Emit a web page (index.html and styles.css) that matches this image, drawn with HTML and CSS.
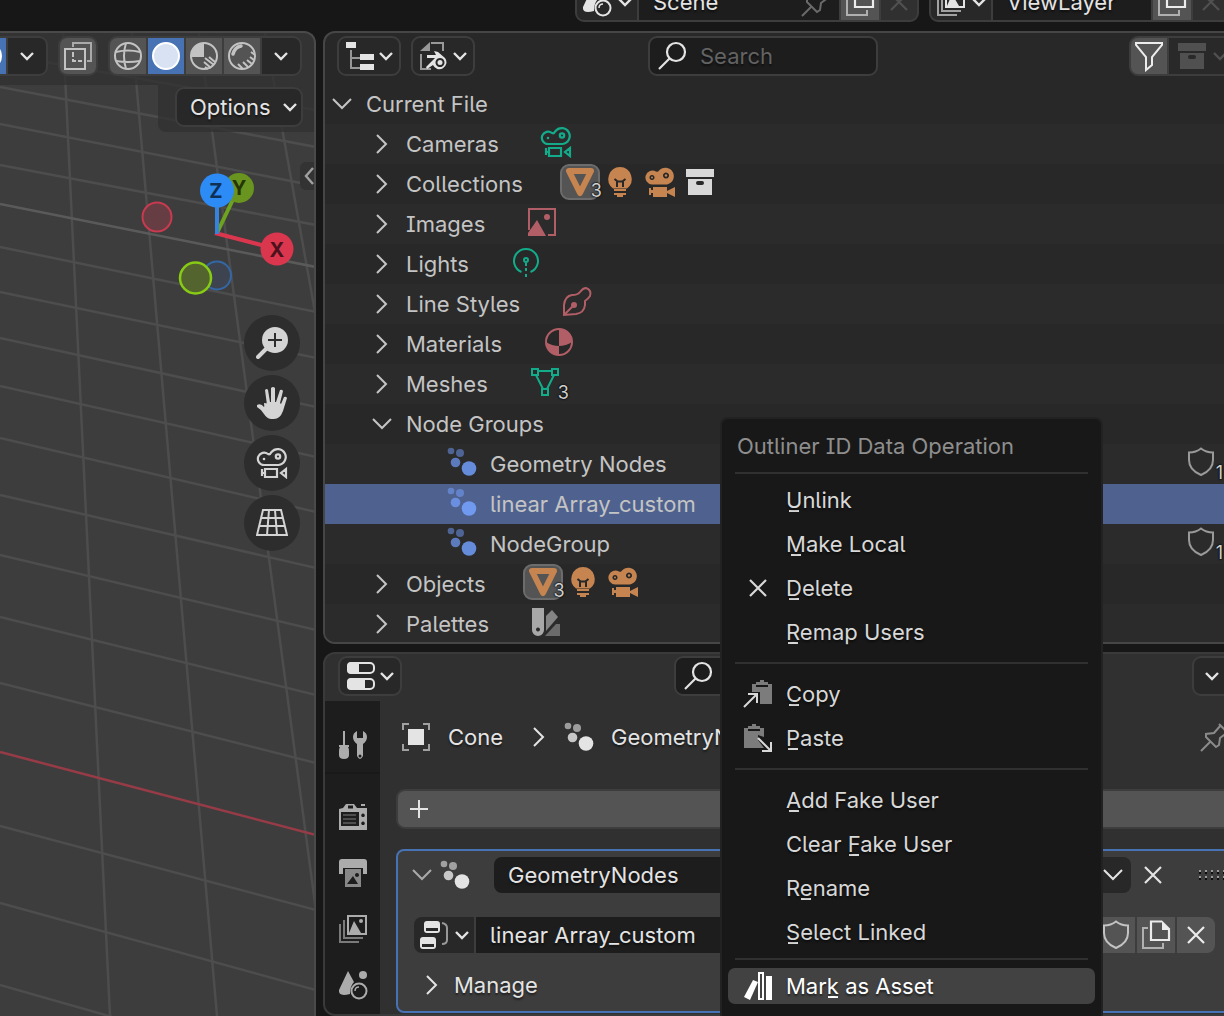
FILE: index.html
```html
<!DOCTYPE html>
<html lang="en">
<head>
<meta charset="utf-8">
<title>Outliner</title>
<link rel="stylesheet" href="styles.css">
</head>
<body>
<svg class="defs" aria-hidden="true">
  <symbol id="down" viewBox="0 0 16 16"><path d="M2 5l6 6 6-6" fill="none" stroke="currentColor" stroke-width="2.4"/></symbol>
  <symbol id="open" viewBox="0 0 20 20"><path d="M1 5l9 9 9-9" fill="none" stroke="currentColor" stroke-width="2"/></symbol>
  <symbol id="closed" viewBox="0 0 20 20"><path d="M5 1l9 9-9 9" fill="none" stroke="currentColor" stroke-width="2"/></symbol>
  <symbol id="cross" viewBox="0 0 32 32"><path d="M8 8l16 16M24 8L8 24" stroke="currentColor" stroke-width="2.2"/></symbol>
  <symbol id="search" viewBox="0 0 32 32"><g fill="none" stroke="currentColor" stroke-width="2.2"><circle cx="20" cy="12" r="9"/><path d="M13.500 18.500L3 29"/></g></symbol>
  <symbol id="camera" viewBox="0 0 32 32"><g fill="none" stroke="currentColor" stroke-width="2.200"><path d="M8 18a6.200 6.200 0 1 1 4-11q2 1 3.500-2A8 8 0 1 1 22.500 18z"/><circle cx="22" cy="9.500" r="2.200"/><path d="M9 22h12v8H9zM9 26H6m0-4v7M30 22v8l-5-4z"/></g><circle cx="8" cy="12" r="1.300" fill="currentColor"/></symbol>
  <symbol id="camera-solid" viewBox="0 0 32 32"><path fill-rule="evenodd" fill="currentColor" d="M8 18.500a7 7 0 1 1 4-13q2 1 3-1A8.500 8.500 0 1 1 23 18.500zM8 9a2.500 2.500 0 1 0 .01 0zM22 6.500a3 3 0 1 0 .01 0zM9 21h14v4l8-4v10l-8-4v4H9v-4H7v2H5v-7h2v2h2z"/><circle cx="8" cy="11.500" r="1" fill="currentColor"/><circle cx="22" cy="9.500" r="1.200" fill="currentColor"/></symbol>
  <symbol id="mesh-object" viewBox="0 0 32 32"><path d="M5 5h22L16 27z" fill="none" stroke="currentColor" stroke-width="6" stroke-linejoin="round"/></symbol>
  <symbol id="bulb" viewBox="0 0 32 32"><path fill="currentColor" d="M16 1a12 12 0 0 1 7 21.500H9A12 12 0 0 1 16 1zM10 23h12v2H10zM10 27h12v2H10zM13 29h6v2h-6z"/><path d="M10.500 13l2.500 2v6M21.500 13L19 15v6M13 15.500h6" fill="none" stroke="#282828" stroke-width="2"/></symbol>
  <symbol id="archive" viewBox="0 0 32 32"><path fill-rule="evenodd" fill="currentColor" d="M2 3h28v8H2zM4 13h24v16H4zM14 15a2 2 0 0 0 0 4h4a2 2 0 0 0 0-4z"/></symbol>
  <symbol id="image" viewBox="0 0 32 32"><path d="M3 24V3h26v26h-7" fill="none" stroke="currentColor" stroke-width="2"/><path d="M2 30v-3l9-13 9 16z" fill="currentColor"/><circle cx="21" cy="11" r="3" fill="currentColor"/></symbol>
  <symbol id="light" viewBox="0 0 32 32"><g fill="none" stroke="currentColor" stroke-width="2"><path d="M11.500 26a12 12 0 1 1 9 0"/><circle cx="16" cy="14" r="2"/><path d="M16 17v3m0 2v3m0 3v3"/></g></symbol>
  <symbol id="linestyle" viewBox="0 0 32 32"><path d="M3 29V19q1-9 8-10 6 0 8-3 3-4 6-4 6 2 4 8-2 3-5 5v4q-1 8-9 9zL12 20" fill="none" stroke="currentColor" stroke-width="2"/><circle cx="13" cy="19" r="3" fill="currentColor"/></symbol>
  <symbol id="material" viewBox="0 0 32 32"><circle cx="16" cy="16" r="13" fill="none" stroke="currentColor" stroke-width="2"/><path d="M16 3a13 13 0 0 1 13 13q-6 4-13 4zM16 20v9A13 13 0 0 1 3 16q6 4 13 4z" fill="currentColor"/></symbol>
  <symbol id="mesh" viewBox="0 0 32 32"><path d="M3 3h6v6H3zM23 3h6v6h-6zM13 23h6v6h-6zM9 5h14M7 9l7 14M25 9l-7 14" fill="none" stroke="currentColor" stroke-width="2"/></symbol>
  <symbol id="nodes" viewBox="0 0 32 32"><g fill="currentColor"><circle cx="5" cy="5" r="3.300" opacity=".6"/><circle cx="14" cy="7" r="4" opacity=".6"/><circle cx="9.500" cy="16.500" r="4.800" opacity=".83"/><circle cx="23" cy="22.500" r="7.300"/></g></symbol>
  <symbol id="palette" viewBox="0 0 32 32"><path fill-rule="evenodd" fill="#a8a8a8" d="M2 2h12v22a6 6 0 0 1-12 0zM8 21.500a2 2 0 1 0 .01 0z"/><path d="M16 10l6-6 6 7-12 14z" fill="#858585"/><path d="M15 30l11-12h4v12z" fill="#6b6b6b"/></symbol>
  <symbol id="shield" viewBox="0 0 32 32"><path d="M16 2.500q5 4 12 4V14q0 10-12 15Q4 24 4 14V6.500q7 0 12-4z" fill="none" stroke="currentColor" stroke-width="2"/></symbol>
  <symbol id="pin" viewBox="0 0 32 32"><path d="M2 30l9-9M20 3l9 9M22 4l-7 8-8 1 0 3 10 10 3-2 1-7 8-6" fill="none" stroke="currentColor" stroke-width="2"/></symbol>
  <symbol id="copy" viewBox="0 0 32 32"><path d="M8 9H3v20h20v-5" fill="none" stroke="#b0b0b0" stroke-width="2"/><path d="M22 2.500H11V21h18V11" fill="none" stroke="currentColor" stroke-width="2.200"/><path d="M22 1.500l8 8v1.500h-8z" fill="currentColor"/></symbol>
  <symbol id="layers" viewBox="0 0 32 32"><g fill="none" stroke="currentColor" stroke-width="2"><path d="M11 3h18v18H11z"/><path opacity=".65" d="M7 7v18h19M3 11v18h19"/></g><path d="M12 20l5-12 7 12z" fill="currentColor"/><circle cx="24" cy="8" r="2" fill="currentColor"/></symbol>
  <symbol id="scene" viewBox="0 0 32 32"><path d="M11 2l6 11q-4 4-4 12-12 3-11-4z" fill="currentColor"/><circle cx="26" cy="6" r="4" fill="currentColor"/><circle cx="22" cy="22" r="7.500" fill="none" stroke="currentColor" stroke-width="2"/><path d="M18 22q0-4 4-4" fill="none" stroke="currentColor" stroke-width="1.500"/></symbol>
  <symbol id="outliner" viewBox="0 0 32 32"><path d="M7 10v18h9M7 18h9" fill="none" stroke="#989898" stroke-width="2"/><path d="M2 2h10v6H2zM16 14h14v6H16zM16 24h14v6H16z" fill="currentColor"/></symbol>
  <symbol id="blendfile" viewBox="0 0 32 32"><path d="M13 3h12v8M3 14v15h10" fill="none" stroke="#989898" stroke-width="2"/><path d="M2 11L12 2v9z" fill="#989898"/><path fill="currentColor" fill-rule="evenodd" d="M9 15h9l-2-4 4 1 7 6a7 7 0 1 1-12 7l-6 4-1-2 9-9H9zM22 18a4.500 4.500 0 1 0 .01 0z"/><circle cx="22" cy="22.500" r="2.500" fill="currentColor"/></symbol>
  <symbol id="funnel" viewBox="0 0 32 32"><path d="M3 3h26v2L19 17v8l-6 5V17L3 5z" fill="none" stroke="currentColor" stroke-width="2"/></symbol>
  <symbol id="properties" viewBox="0 0 32 32"><rect x="3" y="3" width="26" height="10" rx="4" fill="none" stroke="currentColor" stroke-width="2"/><path d="M14 2v12H6q-4 0-4-4V6q0-4 4-4z" fill="currentColor"/><rect x="3" y="19" width="26" height="10" rx="4" fill="none" stroke="currentColor" stroke-width="2"/><path d="M20 18v12H6q-4 0-4-4v-4q0-4 4-4z" fill="currentColor"/></symbol>
  <symbol id="tool" viewBox="0 0 32 32"><path fill="currentColor" d="M6 2h2v14h4v2h-1q1 1 1 4v4q0 4-5 4t-5-4v-4q0-3 1-4H2v-2h4zM20 2v7h6V2q4 2 4 6t-4 7v12q-3 6-6 0V15q-4-3-4-7t4-6z"/><circle cx="23" cy="27" r="1.500" fill="#1d1d1d"/></symbol>
  <symbol id="render" viewBox="0 0 32 32"><path fill-rule="evenodd" fill="currentColor" d="M2 8l4-1 3-4h8l3 4h10v22H2zM4 11v14h18V11zM11 4.500v3h5v-3zM26 12.500a1.800 1.800 0 1 0 .01 0zM26 20.500a1.800 1.800 0 1 0 .01 0zM24 3h4v2h-4z"/><path d="M6 14h13M6 18h13M6 22h13" stroke="currentColor" stroke-width="1.500" opacity=".45"/></symbol>
  <symbol id="output" viewBox="0 0 32 32"><path d="M5 2h22q3 0 3 3v12h-4v-6H6v6H2V5q0-3 3-3z" fill="currentColor"/><path fill-rule="evenodd" d="M8 12h16v18H8zM10 27h11l-5-8zM20 16a2 2 0 1 0 .01 0z" fill="currentColor" opacity=".75"/></symbol>
  <symbol id="object" viewBox="0 0 32 32"><path d="M3 9V3h6M23 3h6v6M29 23v6h-6M9 29H3v-6" fill="none" stroke="#a0a0a0" stroke-width="2"/><path d="M8 8h16v16H8z" fill="currentColor"/></symbol>
  <symbol id="nodetree" viewBox="0 0 32 32"><path fill-rule="evenodd" fill="currentColor" d="M9 2h10q3 0 3 3v6q0 3-3 3H9q-3 0-3-3V5q0-3 3-3zM8 9v3h12V9zM5 18h10q3 0 3 3v6q0 3-3 3H5q-3 0-3-3v-6q0-3 3-3zM4 25v3h12v-3z"/><path d="M24 4q5 1 5 5v12q0 4-5 4" fill="none" stroke="#989898" stroke-width="2"/></symbol>
  <symbol id="clip-out" viewBox="0 0 32 32"><path d="M10 6h4V4h4V2h4v2h4v2h4v20H18V14h-8z" fill="#7c7c7c"/><path d="M14 8h12" stroke="#181818" stroke-width="2"/><path d="M2 29l13-13M6 16h9v9" fill="none" stroke="currentColor" stroke-width="2"/></symbol>
  <symbol id="clip-in" viewBox="0 0 32 32"><path d="M2 6h4V4h4V2h4v2h4v2h4v9l-6-2v5l6 8H2z" fill="#7c7c7c"/><path d="M6 8h12" stroke="#181818" stroke-width="2"/><path d="M16 16l13 13M29 20v9h-9" fill="none" stroke="currentColor" stroke-width="2"/></symbol>
  <symbol id="asset" viewBox="0 0 32 32"><path d="M11 10l5 2-8 18-6-3z" fill="currentColor"/><path d="M17 3h4v26h-4z" fill="none" stroke="currentColor" stroke-width="2"/><path d="M24 6h6v24h-6z" fill="currentColor"/></symbol>
  <symbol id="xray" viewBox="0 0 32 32"><path d="M11 7V3h18v18h-4" fill="none" stroke="#aaa" stroke-width="2"/><path d="M3 9h20v20H3z" fill="none" stroke="currentColor" stroke-width="2"/><path d="M11 12v5m0 2v2h3m2 0h4" fill="none" stroke="currentColor" stroke-width="2"/></symbol>
  <symbol id="wire" viewBox="0 0 32 32"><g fill="none" stroke="currentColor" stroke-width="2"><circle cx="16" cy="16" r="13"/><path d="M14 3q-4 13 0 26M4 12q12-3 24 0M4 21q12 2 24 0"/></g></symbol>
  <symbol id="solid" viewBox="0 0 32 32"><circle cx="16" cy="16" r="13" fill="#d9e2f2" stroke="#fff" stroke-width="2"/></symbol>
  <symbol id="matview" viewBox="0 0 32 32"><circle cx="16" cy="16" r="13" fill="none" stroke="currentColor" stroke-width="2"/><path d="M16 3v14H3A13 13 0 0 1 16 3z" fill="currentColor"/><path d="M17 18l9 7M21 17l6 5M16 22l7 6M17 27l3 2" stroke="currentColor" stroke-width="2"/></symbol>
  <symbol id="rendered" viewBox="0 0 32 32"><circle cx="16" cy="16" r="13" fill="none" stroke="currentColor" stroke-width="2"/><path d="M7 14q2-7 8-8" stroke="currentColor" stroke-width="3.500" stroke-linecap="round" fill="none"/><path d="M25 12l4 3M24 17l4 3M21 20l5 4M17 22l5 5M12 24l5 5" stroke="currentColor" stroke-width="2"/></symbol>
  <symbol id="zoomin" viewBox="0 0 32 32"><circle cx="19" cy="13" r="13" fill="currentColor"/><path d="M10 22l-8 8" stroke="currentColor" stroke-width="4" stroke-linecap="round"/><path d="M19 6v14M12 13h14" stroke="#2d2d2d" stroke-width="2"/></symbol>
  <symbol id="hand" viewBox="0 0 32 32"><path d="M8 16L9 28h13l4-10" fill="currentColor"/><path d="M1 18q4-2 7 2l3-2L9 3q2-2 3 0l2 12h1V1q2-2 4 0v14h1l4-12q2-1 3 1l-3 12 1 1 3-7q2-1 3 1l-4 13q-3 8-9 8-6 1-10-5-2-4-7-7z" fill="currentColor"/></symbol>
  <symbol id="persp" viewBox="0 0 32 32"><path d="M7 3h18l6 25H1zM5 11h22M3 19h26M13 3l-2 25M19 3l2 25" fill="none" stroke="currentColor" stroke-width="2"/></symbol>
</svg>

<header class="topbar">
  <div class="group">
    <button class="cell pick" aria-label="Browse scene"><svg class="i"><use href="#scene"/></svg><svg class="d"><use href="#down"/></svg></button>
    <input class="cell field name" value="Scene" aria-label="Scene name">
    <button class="cell field pinned" aria-label="Pin scene"><svg class="i"><use href="#pin"/></svg></button>
    <button class="cell light" aria-label="New scene"><svg class="i"><use href="#copy"/></svg></button>
    <button class="cell off" aria-label="Remove scene"><svg class="i"><use href="#cross"/></svg></button>
  </div>
  <div class="group">
    <button class="cell pick" aria-label="Browse view layer"><svg class="i"><use href="#layers"/></svg><svg class="d"><use href="#down"/></svg></button>
    <input class="cell field layer" value="ViewLayer" aria-label="View layer name">
    <button class="cell light" aria-label="New view layer"><svg class="i"><use href="#copy"/></svg></button>
    <button class="cell off" aria-label="Remove view layer"><svg class="i"><use href="#cross"/></svg></button>
  </div>
</header>

<main class="workspace">
  <section class="viewport">
    <svg class="grid" viewBox="0 33 316 983" preserveAspectRatio="xMinYMin slice">
      <g stroke="#4d4d4d" stroke-width="2.500" fill="none">
        <path d="M63 33L110 1016M132 33L217 1016M199 33L330 1016M265 33L320 340"/>
        <path d="M0 54L316 110M0 87L316 147M0 124L316 186M0 165L316 225M0 247L316 312M0 292L316 358M0 338L316 407M0 386L316 457M0 438L316 512M0 495L316 568M0 555L316 630M0 617L316 695M0 683L316 763M0 826L316 910M0 903L316 990M0 985L316 1075"/>
        <path d="M0 204L316 267" stroke="#5a5a5a"/>
        <path d="M0 752L316 835" stroke="#973b47"/>
      </g>
    </svg>
    <div class="vp-header">
      <div class="group">
        <button class="cell on" aria-label="Overlays"><svg class="i"><use href="#solid"/></svg></button>
        <button class="cell drop" aria-label="Overlay options"><svg class="d"><use href="#down"/></svg></button>
      </div>
      <div class="group"><button class="cell light" aria-label="X-ray"><svg class="i"><use href="#xray"/></svg></button></div>
      <div class="group shading">
        <button class="cell light" aria-label="Wireframe"><svg class="i"><use href="#wire"/></svg></button>
        <button class="cell on" aria-label="Solid"><svg class="i"><use href="#solid"/></svg></button>
        <button class="cell light" aria-label="Material preview"><svg class="i"><use href="#matview"/></svg></button>
        <button class="cell light" aria-label="Rendered"><svg class="i"><use href="#rendered"/></svg></button>
        <button class="cell drop" aria-label="Shading options"><svg class="d"><use href="#down"/></svg></button>
      </div>
    </div>
    <div class="vp-tools"><button class="box options">Options <svg class="d"><use href="#down"/></svg></button></div>
    <button class="sidebar-tab" aria-label="Show sidebar"><svg viewBox="0 0 10 18"><path d="M9 1L2 9l7 8" fill="none" stroke="currentColor" stroke-width="2.400"/></svg></button>
    <svg class="gizmo" viewBox="140 170 156 128">
      <circle cx="157" cy="217" r="14.500" fill="#653d43" stroke="#c83a4f" stroke-width="2"/>
      <circle cx="217" cy="275.500" r="14" fill="#3d4450" stroke="#3467a5" stroke-width="2"/>
      <circle cx="195.500" cy="278" r="15.500" fill="#54642f" stroke="#87cb14" stroke-width="2.500"/>
      <path d="M217 233l21-44" stroke="#6ea31f" stroke-width="4"/>
      <circle cx="239" cy="188" r="15" fill="#69941f"/><text x="239" y="195" fill="#263508">Y</text>
      <path d="M215 233l62 16" stroke="#da374f" stroke-width="4"/>
      <circle cx="277" cy="249" r="16.500" fill="#da374f"/><text x="277" y="257" fill="#4b121b">X</text>
      <path d="M217 234v-44" stroke="#3583dc" stroke-width="4"/>
      <circle cx="217" cy="190.500" r="17" fill="#2c8bf5"/><text x="216" y="198" fill="#0e3055">Z</text>
    </svg>
    <nav class="vp-nav">
      <button aria-label="Zoom"><svg class="n"><use href="#zoomin"/></svg></button>
      <button aria-label="Move"><svg class="n"><use href="#hand"/></svg></button>
      <button aria-label="Camera view"><svg class="n"><use href="#camera"/></svg></button>
      <button aria-label="Perspective"><svg class="n"><use href="#persp"/></svg></button>
    </nav>
  </section>

  <div class="column">
    <section class="panel outliner">
      <header class="bar">
        <div class="left">
          <button class="box" aria-label="Editor type"><svg class="i"><use href="#outliner"/></svg><svg class="d"><use href="#down"/></svg></button>
          <button class="box" aria-label="Display mode"><svg class="i"><use href="#blendfile"/></svg><svg class="d"><use href="#down"/></svg></button>
        </div>
        <label class="search"><svg class="i"><use href="#search"/></svg><input type="search" placeholder="Search" aria-label="Search"></label>
        <div class="right">
          <div class="group">
            <button class="cell light bright" aria-label="Filter"><svg class="i"><use href="#funnel"/></svg></button>
            <button class="cell off wide" aria-label="Asset filter"><svg class="i"><use href="#archive"/></svg><svg class="d"><use href="#down"/></svg></button>
          </div>
        </div>
      </header>
      <ul class="tree">
        <li class="row l0"><svg class="t"><use href="#open"/></svg><span>Current File</span></li>
        <li class="row l1"><svg class="t"><use href="#closed"/></svg><span>Cameras</span><div class="icons data"><i><svg class="i"><use href="#camera"/></svg></i></div></li>
        <li class="row l1"><svg class="t"><use href="#closed"/></svg><span>Collections</span><div class="icons obj"><i class="active"><svg class="i"><use href="#mesh-object"/></svg><b>3</b></i><i><svg class="i"><use href="#bulb"/></svg></i><i><svg class="i"><use href="#camera-solid"/></svg></i><i class="white"><svg class="i"><use href="#archive"/></svg></i></div></li>
        <li class="row l1"><svg class="t"><use href="#closed"/></svg><span>Images</span><div class="icons shade"><i><svg class="i"><use href="#image"/></svg></i></div></li>
        <li class="row l1"><svg class="t"><use href="#closed"/></svg><span>Lights</span><div class="icons data"><i><svg class="i"><use href="#light"/></svg></i></div></li>
        <li class="row l1"><svg class="t"><use href="#closed"/></svg><span>Line Styles</span><div class="icons shade"><i><svg class="i"><use href="#linestyle"/></svg></i></div></li>
        <li class="row l1"><svg class="t"><use href="#closed"/></svg><span>Materials</span><div class="icons shade"><i><svg class="i"><use href="#material"/></svg></i></div></li>
        <li class="row l1"><svg class="t"><use href="#closed"/></svg><span>Meshes</span><div class="icons data"><i><svg class="i"><use href="#mesh"/></svg><b>3</b></i></div></li>
        <li class="row l1"><svg class="t"><use href="#open"/></svg><span>Node Groups</span></li>
        <li class="row l2"><svg class="i"><use href="#nodes"/></svg><span>Geometry Nodes</span><i class="users"><svg class="i"><use href="#shield"/></svg><b>1</b></i></li>
        <li class="row l2 selected"><svg class="i"><use href="#nodes"/></svg><span>linear Array_custom</span></li>
        <li class="row l2"><svg class="i"><use href="#nodes"/></svg><span>NodeGroup</span><i class="users"><svg class="i"><use href="#shield"/></svg><b>1</b></i></li>
        <li class="row l1"><svg class="t"><use href="#closed"/></svg><span>Objects</span><div class="icons obj"><i class="active"><svg class="i"><use href="#mesh-object"/></svg><b>3</b></i><i><svg class="i"><use href="#bulb"/></svg></i><i><svg class="i"><use href="#camera-solid"/></svg></i></div></li>
        <li class="row l1"><svg class="t"><use href="#closed"/></svg><span>Palettes</span><div class="icons"><i><svg class="i"><use href="#palette"/></svg></i></div></li>
      </ul>
    </section>

    <section class="panel properties">
      <header class="bar">
        <div class="left"><button class="box" aria-label="Editor type"><svg class="i"><use href="#properties"/></svg><svg class="d"><use href="#down"/></svg></button></div>
        <label class="search"><svg class="i"><use href="#search"/></svg><input type="search" aria-label="Search properties"></label>
        <div class="right"><button class="box" aria-label="Options"><svg class="d"><use href="#down"/></svg></button></div>
      </header>
      <div class="props-body">
        <nav class="tabs">
          <button class="first" aria-label="Tool"><svg class="i"><use href="#tool"/></svg></button>
          <button aria-label="Render"><svg class="i"><use href="#render"/></svg></button>
          <button aria-label="Output"><svg class="i"><use href="#output"/></svg></button>
          <button aria-label="View layer"><svg class="i"><use href="#layers"/></svg></button>
          <button aria-label="Scene"><svg class="i"><use href="#scene"/></svg></button>
        </nav>
        <div class="content">
          <div class="crumbs">
            <svg class="i"><use href="#object"/></svg><span>Cone</span>
            <svg class="t"><use href="#closed"/></svg>
            <svg class="i"><use href="#nodes"/></svg><span>GeometryNodes</span>
            <svg class="i pin"><use href="#pin"/></svg>
          </div>
          <button class="add" aria-label="Add modifier"><svg class="t" viewBox="0 0 20 20"><path d="M10 1v18M1 10h18" stroke="currentColor" stroke-width="2"/></svg></button>
          <article class="modifier">
            <div class="mod-head">
              <svg class="t dim"><use href="#open"/></svg>
              <svg class="i"><use href="#nodes"/></svg>
              <div class="strip">
                <input class="cell field" value="GeometryNodes" aria-label="Modifier name">
                <button class="cell drop" aria-label="Modifier menu"><svg class="t"><use href="#open"/></svg></button>
              </div>
              <button class="plain" aria-label="Remove modifier"><svg class="i"><use href="#cross"/></svg></button>
              <svg class="grip" viewBox="0 0 34 12"><path d="M1 2h34M1 8h34" stroke="#9a9a9a" stroke-width="2" stroke-dasharray="2 4"/><path d="M1 4h34M1 10h34" stroke="#0c0c0c" stroke-width="2" stroke-dasharray="2 4"/></svg>
            </div>
            <div class="mod-node strip">
              <button class="cell pick" aria-label="Browse node groups"><svg class="i"><use href="#nodetree"/></svg><svg class="d"><use href="#down"/></svg></button>
              <input class="cell field" value="linear Array_custom" aria-label="Node group name">
              <button class="cell light" aria-label="Fake user"><svg class="i"><use href="#shield"/></svg></button>
              <button class="cell light bright" aria-label="New node group"><svg class="i"><use href="#copy"/></svg></button>
              <button class="cell light bright" aria-label="Unlink"><svg class="i"><use href="#cross"/></svg></button>
            </div>
            <button class="manage"><svg class="t"><use href="#closed"/></svg>Manage</button>
          </article>
        </div>
      </div>
    </section>
  </div>
</main>

<div class="menu" role="menu">
  <div class="title">Outliner ID Data Operation</div>
  <hr class="tight">
  <button role="menuitem"><span><u>U</u>nlink</span></button>
  <button role="menuitem"><span><u>M</u>ake Local</span></button>
  <button role="menuitem"><svg class="i"><use href="#cross"/></svg><span><u>D</u>elete</span></button>
  <button role="menuitem"><span><u>R</u>emap Users</span></button>
  <hr>
  <button role="menuitem"><svg class="i"><use href="#clip-out"/></svg><span><u>C</u>opy</span></button>
  <button role="menuitem"><svg class="i"><use href="#clip-in"/></svg><span><u>P</u>aste</span></button>
  <hr>
  <button role="menuitem"><span><u>A</u>dd Fake User</span></button>
  <button role="menuitem"><span>Clear <u>F</u>ake User</span></button>
  <button role="menuitem"><span>R<u>e</u>name</span></button>
  <button role="menuitem"><span><u>S</u>elect Linked</span></button>
  <hr class="tight">
  <button role="menuitem" class="hover"><svg class="i"><use href="#asset"/></svg><span>Mar<u>k</u> as Asset</span></button>
</div>
</body>
</html>
```
FILE: styles.css
```css
* { box-sizing: border-box; }
body {
  margin: 0;
  height: 100vh;
  overflow: hidden;
  display: flex;
  flex-direction: column;
  background: #171717;
  color: #e4e4e4;
  font: 22px/28px Inter, "Liberation Sans", sans-serif;
  font-feature-settings: "cv05", "cv08";
}
button, input {
  font: inherit;
  font-feature-settings: inherit;
  color: inherit;
  margin: 0;
  padding: 0;
  border: 0;
  background: none;
  min-width: 0;
  text-shadow: 0 2px 2px rgba(0, 0, 0, .5);
}
button { display: flex; align-items: center; justify-content: center; }
svg { flex: none; display: block; }
.defs { position: absolute; width: 0; height: 0; }
.i { width: 32px; height: 32px; }
.d { width: 16px; height: 16px; }
.t { width: 20px; height: 20px; }
.n { width: 32px; height: 32px; }

/* joined controls */
.group {
  display: flex;
  gap: 2px;
  height: 40px;
  flex: none;
  border: 2px solid #3d3d3d;
  border-radius: 9px;
  background: #3d3d3d;
  overflow: hidden;
}
.cell { height: 36px; flex: none; }
.cell.light { width: 36px; background: #545454; color: #c3c3c3; }
.cell.on { width: 36px; background: #4772b3; }
.cell.drop { width: 38px; background: #282828; }
.cell.off { width: 36px; background: #303030; color: #505050; }
.cell.bright { color: #ececec; }
.cell.field { background: #1d1d1d; padding-left: 14px; }
.cell.pick { width: 60px; background: #282828; gap: 4px; }
.box {
  height: 40px;
  padding: 0 5px;
  gap: 2px;
  border: 2px solid #3d3d3d;
  border-radius: 9px;
  background: #282828;
}

.topbar {
  height: 31px;
  flex: none;
  display: flex;
  align-items: flex-end;
  gap: 10px;
  padding: 0 0 9px 575px;
  margin-right: -80px;
}
.topbar .name { width: 160px; }
.topbar .layer { width: 158px; }
.topbar .pinned { width: 40px; padding: 0 6px 0 0; margin-left: -2px; color: #6a6a6a; }
.topbar .light { width: 38px; color: #ececec; }

.workspace {
  flex: 1;
  min-height: 0;
  display: grid;
  grid-template-columns: 316px 1fr;
  gap: 7px;
  margin-right: -36px;
}

/* 3D viewport */
.viewport {
  position: relative;
  display: flex;
  flex-direction: column;
  overflow: hidden;
  background: #3d3d3d;
  border: solid #4a4a4a;
  border-width: 2px 2px 0 0;
  border-radius: 0 12px 0 0;
}
.grid { position: absolute; top: 0; left: 0; width: 100%; height: 100%; }
.vp-header, .vp-tools { position: relative; background: rgba(48, 48, 48, .75); }
.vp-header {
  display: flex;
  justify-content: flex-end;
  gap: 10px;
  height: 52px;
  padding: 3px 12px 0 0;
}
.vp-tools { align-self: flex-end; width: 156px; padding: 2px 11px 5px 17px; border-radius: 0 0 0 8px; }
.options { width: 128px; justify-content: space-between; padding: 0 3px 0 13px; }
.sidebar-tab {
  position: absolute;
  top: 129px;
  right: 0;
  width: 14px;
  height: 28px;
  background: #333;
  border-radius: 6px 0 0 6px;
  color: #a0a0a0;
  justify-content: flex-end;
}
.sidebar-tab svg { width: 10px; height: 18px; }
.gizmo { position: absolute; top: 137px; left: 140px; width: 156px; height: 128px; }
.gizmo text { font-size: 20px; font-weight: 700; text-anchor: middle; }
.vp-nav { position: absolute; top: 282px; right: 14px; display: flex; flex-direction: column; gap: 4px; }
.vp-nav button { width: 56px; height: 56px; border-radius: 50%; background: #2d2d2d; color: #d4d4d4; }

/* right hand column */
.column { display: flex; flex-direction: column; gap: 8px; min-width: 0; min-height: 0; }
.panel { border: 2px solid #464646; border-radius: 12px; overflow: hidden; flex: none; }
.outliner { background: #282828; }
.bar { display: grid; grid-template-columns: 311px 230px 1fr; align-items: start; padding: 3px 21px 8px 12px; }
.bar .left { display: flex; gap: 10px; }
.bar .right { display: flex; justify-content: flex-end; }
.bar .box { width: 64px; }
.search {
  display: flex;
  align-items: center;
  gap: 12px;
  height: 40px;
  padding: 0 6px;
  border: 2px solid #3d3d3d;
  border-radius: 9px;
  background: #1d1d1d;
}
.search input { flex: 1; outline: 0; }
.search input::placeholder { color: #636363; opacity: 1; }
.cell.wide { width: 66px; gap: 4px; background: #292929; }

.tree { list-style: none; margin: 0; padding: 0; color: #c4c4c4; }
.row { display: flex; align-items: center; height: 40px; }
.row:nth-child(even) { background: #2b2b2b; }
.row:last-child { height: 38px; padding-top: 2px; }
.l0 { padding-left: 7px; gap: 14px; }
.l1 { padding-left: 47px; gap: 14px; }
.l2 { padding-left: 121px; gap: 12px; }
.l2 > .i { color: #658bdb; margin-bottom: 4px; }
.row.selected { background: #4f628f; }
.selected > .i { color: #7099f0; }
.icons { display: flex; margin: 0 0 4px 23px; }
.icons i, .users { position: relative; display: flex; align-items: center; justify-content: center; width: 40px; height: 36px; font-style: normal; }
.icons .active { background: #545454; border: 2px solid #6c6c6c; border-radius: 9px; }
.icons b, .users b { position: absolute; right: -4px; bottom: -5px; font-size: 18px; line-height: 24px; font-weight: 400; color: #d0d0d0; text-shadow: 0 0 2px #000, 0 0 2px #000; }
.data { color: #12ac8a; }
.obj { color: #c58450; }
.shade { color: #b25e66; }
.icons .white { color: #d8d8d8; }
.users { margin: 0 37px 4px auto; color: #9a9a9a; }
.users b { right: -2px; }

/* properties editor */
.properties { flex: 1; background: #303030; display: flex; flex-direction: column; border-color: #3a3a3a; }
.properties .bar { grid-template-columns: 336px 230px 1fr; padding: 2px 26px 5px 13px; }
.properties .bar .right .box { width: 40px; }
.props-body { flex: 1; display: flex; min-height: 0; }
.tabs { width: 55px; background: #1d1d1d; color: #acacac; padding-top: 17px; }
.tabs button { width: 55px; height: 56px; }
.tabs .first { margin-bottom: 15px; border-bottom: 2px solid #191919; }
.content { flex: 1; padding: 15px 0 0 16px; min-width: 0; }
.crumbs { display: flex; align-items: center; height: 40px; margin: 1px 0 0 4px; gap: 16px; text-shadow: 0 2px 2px rgba(0, 0, 0, .5); }
.crumbs .t { margin: 0 -2px 0 10px; }
.crumbs .pin { margin: 0 27px 0 auto; color: #8a8a8a; }
.add { width: 100%; height: 40px; margin: 32px 0 20px; padding-left: 11px; justify-content: flex-start; border: 2px solid #3d3d3d; border-radius: 9px; background: #545454; }
.modifier { height: 164px; border: 2px solid #4772b3; border-radius: 8px; background: #3d3d3d; padding: 6px 36px 0 14px; }
.strip { display: flex; gap: 2px; border-radius: 8px; overflow: hidden; }
.strip .field { flex: 1; }
.mod-head { display: flex; align-items: center; height: 36px; }
.mod-head > .i { margin-left: 7px; }
.mod-head .strip { flex: 1; gap: 0; margin-left: 23px; }
.mod-head .drop { width: 36px; }
.plain { width: 44px; }
.grip { width: 34px; height: 12px; margin-left: 23px; color: #999; margin-right: -12px; }
.dim { color: #aaa; }
.mod-node { margin: 24px 5px 0 2px; }
.mod-node .light { width: 38px; }
.manage { height: 36px; margin: 14px 0 0 10px; gap: 12px; }

/* context menu */
.menu {
  position: absolute;
  left: 720px;
  top: 417px;
  width: 383px;
  padding: 8px 6px;
  background: #181818;
  border: 2px solid #222;
  border-radius: 8px;
  color: #d8d8d8;
}
.title { height: 38px; line-height: 38px; padding-left: 9px; color: #8e8e8e; }
.menu hr { height: 2px; margin: 8px 7px; border: 0; background: #303030; }
.menu hr.tight { margin: 4px 7px; }
.menu .title + hr { margin-top: 7px; }
.menu button { width: 100%; height: 44px; padding-left: 14px; gap: 12px; justify-content: flex-start; border-radius: 7px; }
.menu button span:first-child { padding-left: 44px; }
.menu .hover { height: 36px; margin: 8px 0; background: #424242; color: #fff; }
.menu u { text-decoration: none; background: linear-gradient(currentColor, currentColor) center calc(100% - 1px) / 10px 2px no-repeat; }
```
